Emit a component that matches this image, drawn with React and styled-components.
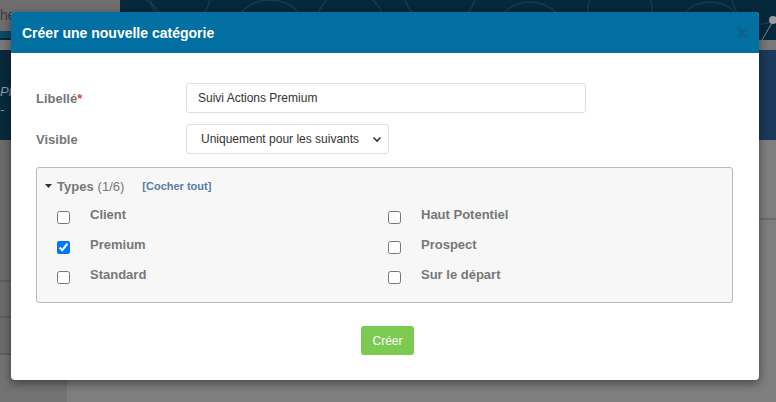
import React from "react";
import styled, { createGlobalStyle } from "styled-components";

const Global = createGlobalStyle`
  html, body { margin: 0; padding: 0; }
  body { font-family: "Liberation Sans", Arial, sans-serif; background: #6c6c6c; }
  * { box-sizing: border-box; }
`;

const Page = styled.div`
  position: relative;
  width: 776px;
  height: 402px;
  overflow: hidden;
  display: flex;
  flex-direction: column;
  background: #6c6c6c;
`;

const TopRow = styled.div`
  display: flex;
  height: 40px;
  background: #05283c;
`;

const SearchCol = styled.div`
  width: 120px;
  display: flex;
  flex-direction: column;
`;

const SearchBox = styled.div`
  height: 31px;
  background: #6e6e6e;
  color: #3c3c3c;
  font-size: 14px;
  line-height: 31px;
  overflow: hidden;
  white-space: nowrap;
`;

const SearchStrip = styled.div`
  height: 7px;
  background: #0f486b;
`;

const Pattern = styled.svg`
  flex: 1;
  height: 40px;
  display: block;
`;

const GrayStrip = styled.div`
  height: 10px;
  background: #787878;
`;

const NavyBand = styled.div`
  display: flex;
  height: 90px;
`;

const NavyLeft = styled.div`
  width: 120px;
  background: #0a293c;
  color: #8a9aa8;
  font-size: 13px;
  font-style: italic;
  padding-top: 33px;
  line-height: 18px;
`;

const NavyRight = styled.div`
  flex: 1;
  background: #1b395a;
`;

const Content = styled.div`
  flex: 1;
  display: flex;
`;

const Sidebar = styled.div`
  width: 67px;
  display: flex;
  flex-direction: column;
`;

const SideBlock = styled.div`
  height: ${(p) => p.$h}px;
  background: #6b6b6b;
  border-bottom: 2px solid #5e5e5e;
`;

const SideRest = styled.div`
  flex: 1;
  background: #727272;
`;

const Main = styled.div`
  flex: 1;
  background: #7e7e7e;
  display: flex;
  flex-direction: column;
`;

const MainTop = styled.div`
  height: 80px;
  border-bottom: 2px solid #6a6a6a;
`;

const Overlay = styled.div`
  position: absolute;
  inset: 0;
  padding: 12px 0 0 11px;
`;

const Modal = styled.div`
  width: 748px;
  height: 368px;
  background: #fff;
  border-radius: 4px;
  overflow: hidden;
  box-shadow: 0 3px 10px rgba(0, 0, 0, 0.45);
  display: flex;
  flex-direction: column;
`;

const Header = styled.div`
  height: 41px;
  background: #016fa1;
  display: flex;
  align-items: center;
  justify-content: space-between;
  padding: 0 10px 0 11px;
`;

const Title = styled.h4`
  margin: 0;
  color: #fff;
  font-size: 14px;
  font-weight: bold;
`;

const Close = styled.span`
  color: #11608b;
  font-size: 22px;
  font-weight: bold;
  line-height: 1;
  margin-top: 1px;
`;

const Body = styled.div`
  flex: 1;
  padding: 30px 26px 25px 25px;
  display: flex;
  flex-direction: column;
`;

const FormRow = styled.div`
  display: flex;
  align-items: center;
  margin-bottom: ${(p) => p.$mb}px;
`;

const Label = styled.label`
  width: 150px;
  color: #777;
  font-size: 13px;
  font-weight: bold;
`;

const Required = styled.span`
  color: #e8423a;
`;

const TextInput = styled.input`
  width: 400px;
  height: 30px;
  border: 1px solid #ddd;
  border-radius: 3px;
  padding: 0 11px;
  font-family: "Liberation Sans", Arial, sans-serif;
  font-size: 12px;
  color: #333;
  outline: none;
`;

const SelectBox = styled.div`
  width: 203px;
  height: 30px;
  border: 1px solid #ddd;
  border-radius: 3px;
  display: flex;
  align-items: center;
  padding: 0 6px 0 14px;
`;

const Select = styled.select`
  appearance: none;
  border: none;
  background: transparent;
  flex: 1;
  font-family: "Liberation Sans", Arial, sans-serif;
  font-size: 12px;
  color: #333;
  padding: 0;
  outline: none;
`;

const Fieldset = styled.div`
  height: 136px;
  background: #f7f7f7;
  border: 1px solid #b9b9b9;
  border-radius: 3px;
  padding: 10px 14px 0 20px;
`;

const Legend = styled.div`
  display: flex;
  align-items: center;
  height: 16px;
  margin-left: -12px;
  font-size: 13px;
  color: #777;
`;

const Caret = styled.svg`
  width: 7px;
  height: 4px;
  margin-right: 5px;
`;

const Strong = styled.span`
  font-weight: bold;
`;

const Count = styled.span`
  margin-left: 4px;
`;

const CheckAll = styled.a`
  margin-left: 18px;
  font-size: 11px;
  font-weight: bold;
  color: #5b7ca6;
  text-decoration: none;
`;

const Grid = styled.div`
  margin-top: 5px;
  display: grid;
  grid-template-columns: 331px 1fr;
  grid-auto-flow: column;
  grid-template-rows: repeat(3, 30px);
`;

const Item = styled.label`
  display: flex;
  align-items: center;
  font-size: 13px;
  font-weight: bold;
  color: #777;
`;

const Check = styled.input`
  width: 13px;
  height: 13px;
  margin: 6px 20px 0 0;
`;

const Footer = styled.div`
  margin-top: 23px;
  padding-left: 6px;
  display: flex;
  justify-content: center;
`;

const Button = styled.button`
  width: 53px;
  height: 29px;
  border: none;
  border-radius: 3px;
  background: #7bcb51;
  color: #fff;
  font-family: "Liberation Sans", Arial, sans-serif;
  font-size: 12px;
  padding: 0;
`;

const types = [
  { label: "Client", checked: false },
  { label: "Premium", checked: true },
  { label: "Standard", checked: false },
  { label: "Haut Potentiel", checked: false },
  { label: "Prospect", checked: false },
  { label: "Sur le départ", checked: false },
];

export default function App() {
  return (
    <>
      <Global />
      <Page>
        <TopRow>
          <SearchCol>
            <SearchBox>he</SearchBox>
            <SearchStrip />
          </SearchCol>
          <Pattern viewBox="0 0 656 40" preserveAspectRatio="none">
            <g fill="none" stroke="rgba(120,170,200,0.14)" strokeWidth="1.5">
              <circle cx="10" cy="30" r="34" />
              <circle cx="60" cy="-5" r="30" />
              <circle cx="150" cy="40" r="40" />
              <circle cx="230" cy="25" r="34" />
              <circle cx="320" cy="-10" r="36" />
              <circle cx="410" cy="40" r="38" />
              <circle cx="500" cy="10" r="32" />
              <circle cx="590" cy="38" r="36" />
              <circle cx="640" cy="-4" r="28" />
            </g>
            <line x1="642" y1="40" x2="653" y2="21" stroke="#8a8a8a" strokeWidth="1" />
            <circle cx="653" cy="20" r="4" fill="#9a9a9a" />
          </Pattern>
        </TopRow>
        <GrayStrip />
        <NavyBand>
          <NavyLeft>
            Pla
            <br />-
          </NavyLeft>
          <NavyRight />
        </NavyBand>
        <Content>
          <Sidebar>
            <SideBlock $h={142} />
            <SideBlock $h={36} />
            <SideBlock $h={37} />
            <SideRest />
          </Sidebar>
          <Main>
            <MainTop />
          </Main>
        </Content>

        <Overlay>
          <Modal>
            <Header>
              <Title>Créer une nouvelle catégorie</Title>
              <Close>×</Close>
            </Header>
            <Body>
              <FormRow $mb={11}>
                <Label>
                  Libellé<Required>*</Required>
                </Label>
                <TextInput defaultValue="Suivi Actions Premium" />
              </FormRow>
              <FormRow $mb={13}>
                <Label>Visible</Label>
                <SelectBox>
                  <Select defaultValue="suivants">
                    <option value="suivants">Uniquement pour les suivants</option>
                    <option value="tous">Pour tous</option>
                  </Select>
                  <svg width="10" height="10" viewBox="0 0 10 10">
                    <path d="M1.5 3.5 L5 7 L8.5 3.5" fill="none" stroke="#333" strokeWidth="1.6" />
                  </svg>
                </SelectBox>
              </FormRow>
              <Fieldset>
                <Legend>
                  <Caret viewBox="0 0 7 4">
                    <path d="M0 0 H7 L3.5 4 Z" fill="#333" />
                  </Caret>
                  <Strong>Types</Strong>
                  <Count>(1/6)</Count>
                  <CheckAll>[Cocher tout]</CheckAll>
                </Legend>
                <Grid>
                  {types.map((t) => (
                    <Item key={t.label}>
                      <Check type="checkbox" defaultChecked={t.checked} />
                      {t.label}
                    </Item>
                  ))}
                </Grid>
              </Fieldset>
              <Footer>
                <Button>Créer</Button>
              </Footer>
            </Body>
          </Modal>
        </Overlay>
      </Page>
    </>
  );
}
